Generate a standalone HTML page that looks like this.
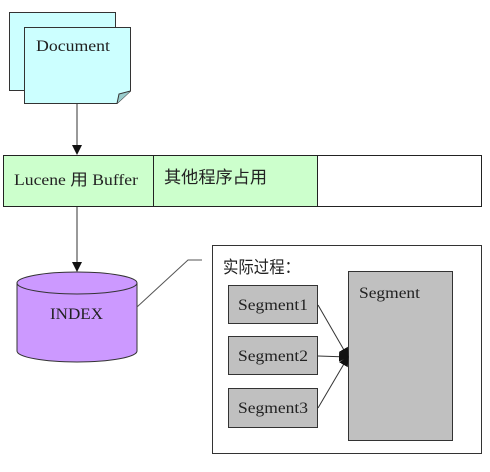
<!DOCTYPE html>
<html><head><meta charset="utf-8"><style>
html,body{margin:0;padding:0;background:#fff;}
svg text{font-family:"Liberation Serif","Noto Serif CJK SC",serif;font-size:16px;fill:#222;}
.cjk{font-family:"Liberation Sans","Noto Sans CJK SC",sans-serif;font-size:17px;}
</style></head><body>
<svg width="490" height="467" viewBox="0 0 490 467" xmlns="http://www.w3.org/2000/svg">
<defs><marker id="a" markerWidth="10" markerHeight="10" refX="9" refY="5" orient="auto" markerUnits="userSpaceOnUse"><path d="M0,0 L10,5 L0,10 z" fill="#111"/></marker></defs>
<rect x="9.5" y="12.5" width="106" height="78" fill="#ccffff" stroke="#333"/>
<path d="M24.5,27.5 H130.5 V91 L117,103.5 H24.5 Z" fill="#ccffff" stroke="#333"/>
<path d="M117,103.5 L119,94 L130.5,91" fill="#9cc" stroke="#333"/>
<text x="36" y="51" textLength="74" lengthAdjust="spacingAndGlyphs">Document</text>
<line x1="77" y1="103" x2="77" y2="154" stroke="#333" marker-end="url(#a)"/>
<rect x="3.5" y="155.5" width="478" height="51" fill="#fff" stroke="#222"/>
<rect x="3.5" y="155.5" width="314" height="51" fill="#ccffcc" stroke="#222"/>
<line x1="153.5" y1="155" x2="153.5" y2="207" stroke="#222"/>
<text x="14" y="185" textLength="124" lengthAdjust="spacingAndGlyphs" style="font-family:'Liberation Serif','Noto Sans CJK SC',serif">Lucene 用 Buffer</text>
<text x="164" y="183" class="cjk" textLength="103" lengthAdjust="spacingAndGlyphs">其他程序占用</text>
<line x1="77" y1="207" x2="77" y2="271" stroke="#333" marker-end="url(#a)"/>
<path d="M17,283 V351 A60,11 0 0 0 137,351 V283" fill="#cc99ff" stroke="#333"/>
<ellipse cx="77" cy="283" rx="60" ry="11" fill="#cc99ff" stroke="#333"/>
<text x="50" y="319" textLength="53" lengthAdjust="spacingAndGlyphs">INDEX</text>
<polyline points="137,307 188,260 202,260" fill="none" stroke="#555"/>
<rect x="212.5" y="245.5" width="269" height="208" fill="#fff" stroke="#333"/>
<text x="223" y="273" class="cjk" textLength="77" lengthAdjust="spacingAndGlyphs">实际过程：</text>
<rect x="348.5" y="271.5" width="104" height="169" fill="#c0c0c0" stroke="#333"/>
<text x="359" y="298" textLength="61" lengthAdjust="spacingAndGlyphs">Segment</text>
<rect x="228.5" y="285.5" width="89" height="38" fill="#c0c0c0" stroke="#333"/>
<rect x="228.5" y="336.5" width="89" height="38" fill="#c0c0c0" stroke="#333"/>
<rect x="228.5" y="388.5" width="89" height="39" fill="#c0c0c0" stroke="#333"/>
<text x="238" y="310" textLength="70" lengthAdjust="spacingAndGlyphs">Segment1</text>
<text x="238" y="361" textLength="70" lengthAdjust="spacingAndGlyphs">Segment2</text>
<text x="238" y="413" textLength="70" lengthAdjust="spacingAndGlyphs">Segment3</text>
<line x1="318" y1="305" x2="348" y2="357" stroke="#333" marker-end="url(#a)"/>
<line x1="318" y1="356" x2="348" y2="357" stroke="#333" marker-end="url(#a)"/>
<line x1="318" y1="408" x2="348" y2="357" stroke="#333" marker-end="url(#a)"/>
</svg>
</body></html>
